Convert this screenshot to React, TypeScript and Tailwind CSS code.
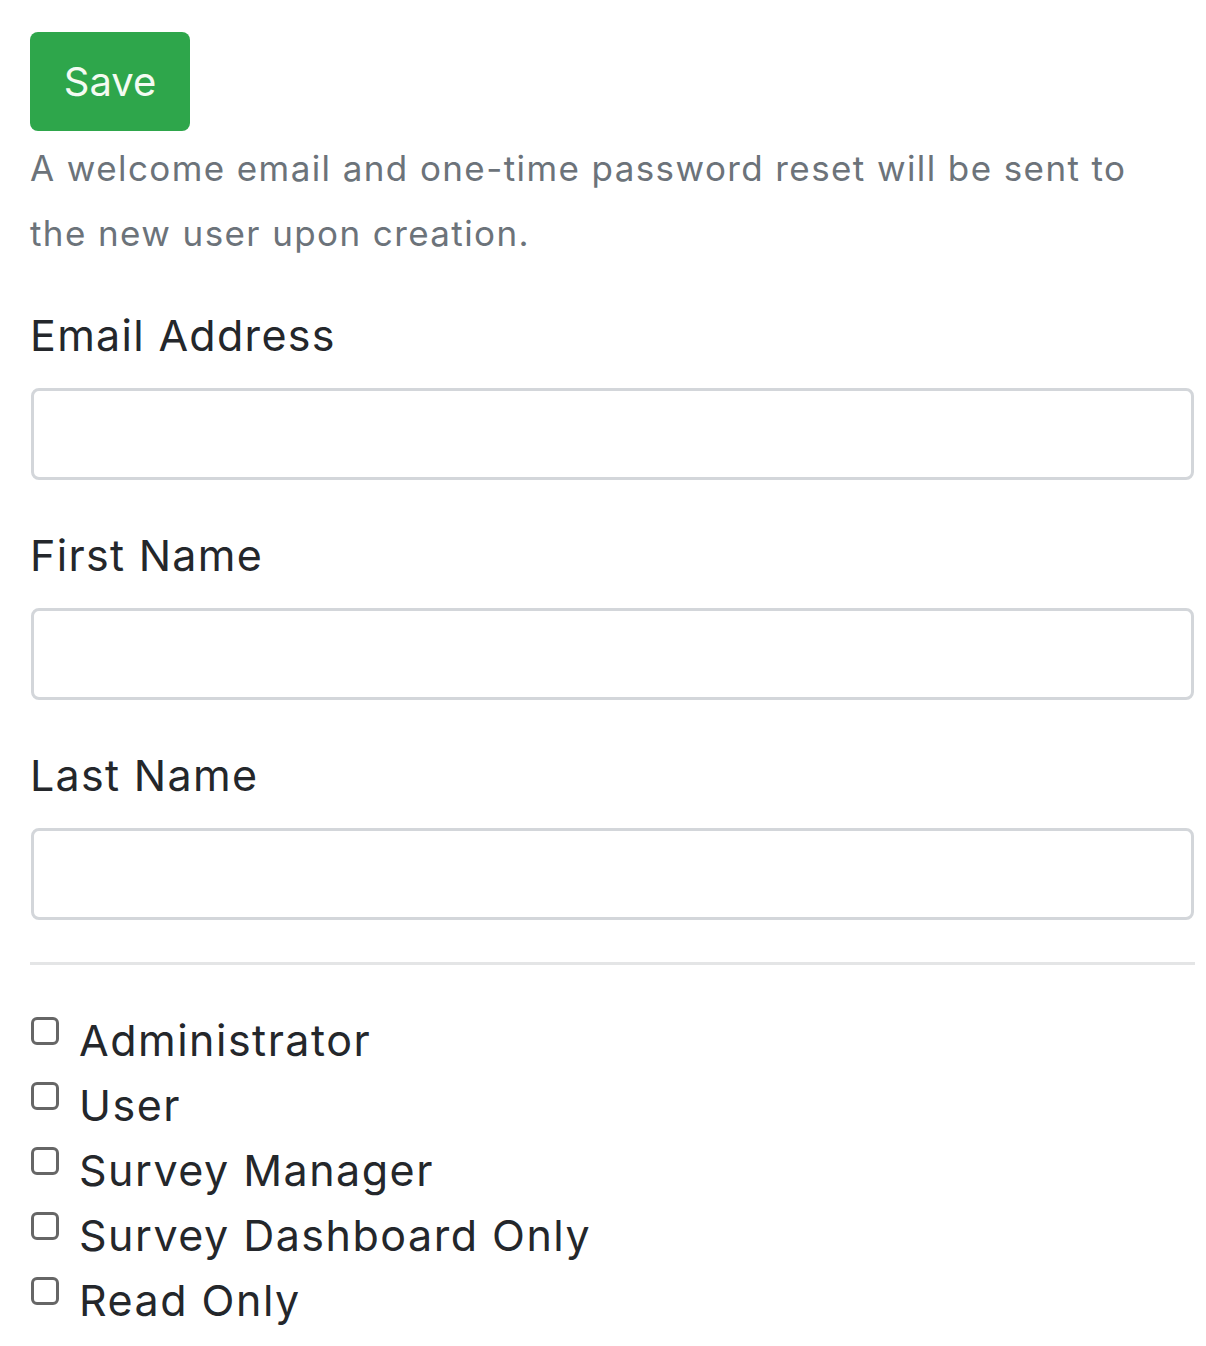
import { useState } from "react";

const fields = ["Email Address", "First Name", "Last Name"];
const roles = ["Administrator", "User", "Survey Manager", "Survey Dashboard Only", "Read Only"];

export default function App() {
    const [values, setValues] = useState<Record<string, string>>({});
    const [checked, setChecked] = useState<string[]>([]);

    const toggleRole = (role: string) => {
        setChecked((prev) => (prev.includes(role) ? prev.filter((r) => r !== role) : [...prev, role]));
    };

    return (
        <div className="min-h-[1346px] bg-white pl-[30px] pr-[12px] pt-[32px]" style={{ fontFamily: "Inter, 'Liberation Sans', sans-serif" }}>
            <button type="button" className="flex h-[99px] w-[160px] items-center justify-center rounded-[8px] bg-[#2ea64b] text-[40px] text-[#f4fbf2]">
                Save
            </button>

            <p className="mt-[5px] text-[35px] leading-[65px] tracking-[1.4px] text-[#6c737a]">
                A welcome email and one-time password reset will be sent to
                <br />
                the new user upon creation.
            </p>

            <div className="mt-[39px]">
                {fields.map((field) => (
                    <div key={field} className="mb-[45px]">
                        <label className="block text-[43px] leading-[60px] tracking-[1.3px] text-[#24272b]">{field}</label>
                        <input
                            type="text"
                            value={values[field] ?? ""}
                            onChange={(e) => setValues({ ...values, [field]: e.target.value })}
                            className="mt-[23px] ml-[1px] block h-[92px] w-[1163px] rounded-[8px] border-[3px] border-[#d3d6da] bg-white px-4 text-[38px] outline-none"
                        />
                    </div>
                ))}
            </div>

            <hr className="-mt-[3px] w-[1165px] border-t-[3px] border-[#e4e5e6]" />

            <div className="mt-[43px]">
                {roles.map((role) => (
                    <label key={role} className="flex h-[65px] cursor-pointer items-start" onClick={() => toggleRole(role)}>
                        <span className="ml-[1px] mt-[9px] flex h-[28px] w-[28px] items-center justify-center rounded-[6px] border-[3px] border-[#666] bg-white">
                            {checked.includes(role) && <span className="h-[12px] w-[12px] rounded-[2px] bg-[#444]" />}
                        </span>
                        <span className="ml-[20px] text-[43px] leading-[65px] tracking-[1.5px] text-[#24272b]">{role}</span>
                    </label>
                ))}
            </div>
        </div>
    );
}
